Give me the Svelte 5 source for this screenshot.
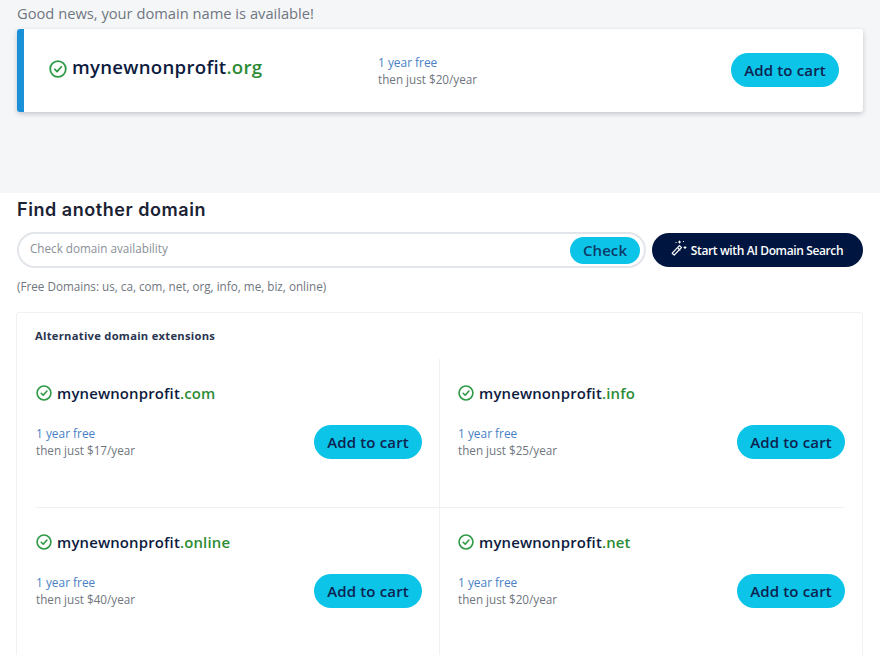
<script lang="ts">
	const alternatives = [
		{ tld: 'com', price: 17 },
		{ tld: 'info', price: 25 },
		{ tld: 'online', price: 40 },
		{ tld: 'net', price: 20 }
	];
</script>

{#snippet check(size: number)}
	<svg class="check" width={size} height={size} viewBox="0 0 24 24" fill="none" stroke="#2f9a46" stroke-width="2.4" stroke-linecap="round" stroke-linejoin="round">
		<circle cx="12" cy="12" r="10.4" />
		<path d="M7.8 12.4l3 3 5.6-6.4" />
	</svg>
{/snippet}

<div class="page">
	<section class="result">
		<p class="news">Good news, your domain name is available!</p>
		<div class="hit">
			<div class="hit-name">
				{@render check(18)}
				<span>mynewnonprofit<b>.org</b></span>
			</div>
			<div class="price">
				<div class="free">1 year free</div>
				<div class="then">then just $20/year</div>
			</div>
			<button type="button" class="cart">Add to cart</button>
		</div>
	</section>

	<section class="search">
		<h2>Find another domain</h2>
		<div class="search-row">
			<div class="field">
				<span class="placeholder">Check domain availability</span>
				<button type="button" class="go">Check</button>
			</div>
			<button type="button" class="ai">
				<svg width="18" height="18" viewBox="0 0 18 18" fill="none" stroke="#fff" stroke-linecap="round">
					<path d="M2.2 15.2l7.2-7.6 2 1.9-7.2 7.6z" transform="translate(0 -1)" stroke-width="1.2" stroke-linejoin="round" />
					<path d="M8 9.2l1.9 1.9" stroke-width="1.2" />
					<path d="M9.5 2v2M8.5 3h2M15 7.5v2M14 8.5h2M13.5 2.5l.01.01M6 3.5l.01.01" stroke-width="1.1" />
				</svg>
				Start with AI Domain Search
			</button>
		</div>
		<p class="hint">(Free Domains: us, ca, com, net, org, info, me, biz, online)</p>

		<div class="panel">
			<h3>Alternative domain extensions</h3>
			<div class="grid">
				{#each alternatives as alt}
					<div class="cell">
						<div class="cell-name">
							{@render check(16)}
							<span>mynewnonprofit<b>.{alt.tld}</b></span>
						</div>
						<div class="cell-row">
							<div class="price">
								<div class="free">1 year free</div>
								<div class="then">then just ${alt.price}/year</div>
							</div>
							<button type="button" class="cart">Add to cart</button>
						</div>
					</div>
				{/each}
			</div>
		</div>
	</section>
</div>

<style>
	:global(body) {
		background: #fff;
	}
	.page {
		width: 880px;
		height: 655px;
		overflow: hidden;
		font-family: 'Open Sans', sans-serif;
		color: #0d1b3e;
	}
	.result {
		height: 193px;
		box-sizing: border-box;
		background: #f5f6f8;
		padding: 4px 17px 0;
	}
	.news {
		margin: 0 0 7px;
		font-size: 14.7px;
		line-height: 18px;
		color: #6f7780;
	}
	.hit {
		height: 83px;
		box-sizing: border-box;
		display: flex;
		align-items: center;
		background: #fff;
		border-left: 7px solid #1a90d9;
		border-radius: 3px;
		box-shadow: 0 2px 5px rgba(20, 30, 50, 0.22);
		padding: 0 24px 0 25px;
	}
	.hit-name {
		display: flex;
		align-items: center;
		gap: 5px;
		width: 329px;
		margin-top: -8px;
		font-size: 18.6px;
		font-weight: 600;
		letter-spacing: 0.28px;
	}
	.hit-name .check {
		margin-top: 4px;
	}
	.hit-name b,
	.cell-name b {
		font-weight: 600;
		color: #2c8c35;
	}
	.hit .price {
		flex: 1;
		margin-top: -1px;
	}
	.free {
		font-size: 11.9px;
		line-height: 18px;
		color: #4a7fc4;
	}
	.then {
		font-size: 11.7px;
		line-height: 17px;
		color: #70767e;
	}
	.cart {
		width: 108px;
		height: 34px;
		padding: 0;
		border: none;
		border-radius: 17px;
		background: #0cc4e8;
		color: #0c2350;
		font-family: inherit;
		font-size: 15px;
		font-weight: 600;
		letter-spacing: 0.15px;
	}
	.hit .cart {
		margin-top: -2px;
	}
	.search {
		padding: 0 17px;
	}
	h2 {
		margin: 0;
		padding-top: 6px;
		font-family: Inter, sans-serif;
		font-size: 18px;
		line-height: 21px;
		font-weight: 600;
		letter-spacing: 0.55px;
		color: #1a2233;
	}
	.search-row {
		display: flex;
		align-items: center;
		gap: 6px;
		margin-top: 12px;
	}
	.field {
		width: 629px;
		height: 36px;
		box-sizing: border-box;
		display: flex;
		align-items: center;
		justify-content: space-between;
		border: 2px solid #e2e5ea;
		border-radius: 18px;
		padding: 0 4px 0 11px;
	}
	.placeholder {
		font-size: 11.7px;
		color: #8a9097;
		margin-top: -5px;
	}
	.go {
		width: 70px;
		height: 27px;
		padding: 0;
		border: none;
		border-radius: 14px;
		background: #0cc4e8;
		color: #0c3a68;
		font-family: inherit;
		font-size: 15px;
		font-weight: 600;
		letter-spacing: 0.1px;
	}
	.ai {
		width: 211px;
		height: 34px;
		display: flex;
		align-items: center;
		justify-content: center;
		gap: 3px;
		padding: 0 2px 0 0;
		border: none;
		border-radius: 17px;
		background: #001641;
		color: #fff;
		font-family: inherit;
		font-size: 12px;
		font-weight: 600;
		letter-spacing: -0.38px;
	}
	.ai svg {
		margin-top: -4px;
	}
	.hint {
		margin: 10px 0 0;
		font-size: 11.7px;
		line-height: 16px;
		color: #70767e;
	}
	.panel {
		margin-top: 18px;
		margin-left: -1px;
		border: 1px solid #f0f1f3;
		border-radius: 3px;
		height: 400px;
	}
	h3 {
		margin: 0;
		padding: 15px 18px 16px;
		font-size: 11.2px;
		line-height: 15px;
		font-weight: 700;
		letter-spacing: 0.28px;
		color: #2a3550;
	}
	.grid {
		display: grid;
		grid-template-columns: 423px 1fr;
	}
	.cell {
		height: 149px;
		box-sizing: border-box;
		padding: 0 17px 0 18px;
		position: relative;
	}
	.cell:nth-child(odd) {
		border-right: 1px solid #f0f1f3;
		padding-left: 19px;
		padding-right: 17px;
	}
	/* row rule stops short of the panel edges, so it can't be a cell border */
	.cell:nth-child(-n + 2)::after {
		content: '';
		position: absolute;
		bottom: 0;
		left: 0;
		right: 17px;
		height: 1px;
		background: #f0f1f3;
	}
	.cell:nth-child(1)::after {
		left: 19px;
		right: -1px;
	}
	.cell-name {
		display: flex;
		align-items: center;
		gap: 5px;
		padding-top: 25px;
		font-size: 14.9px;
		line-height: 18px;
		font-weight: 600;
		letter-spacing: 0.17px;
	}
	.cell-row {
		display: flex;
		align-items: center;
		justify-content: space-between;
		margin-top: 22px;
	}
</style>
